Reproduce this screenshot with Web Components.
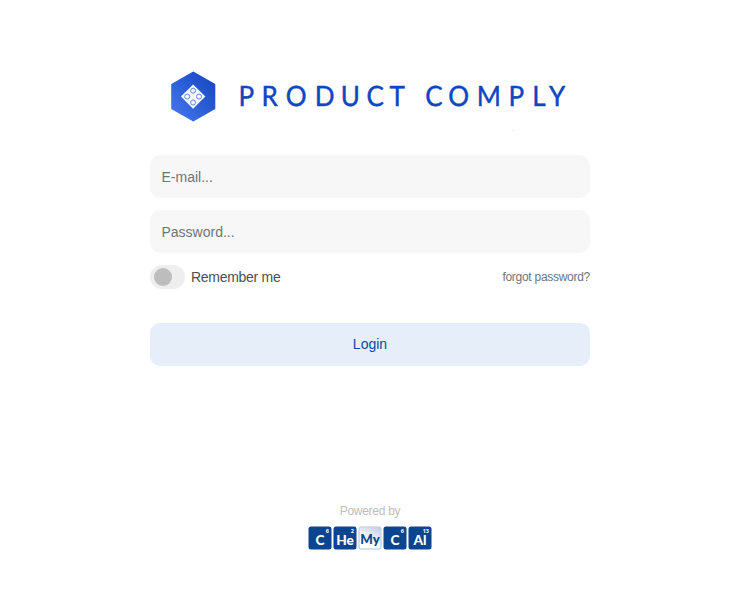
<!DOCTYPE html>
<html lang="en"><head><meta charset="utf-8"><title>Product Comply</title>
<style>
html,body{margin:0;background:#fff;font-family:"Liberation Sans",Arial,sans-serif;font-size:14px}
</style></head><body>
<login-page></login-page>
<script>
function define(name, html){
  const t=document.createElement('template'); t.innerHTML=html;
  customElements.define(name, class extends HTMLElement{
    constructor(){super();this.attachShadow({mode:'open'}).append(t.content.cloneNode(true));}
    connectedCallback(){
      const i=this.shadowRoot.querySelector('input');
      if(i){i.type=this.getAttribute('type')||'text';i.placeholder=this.getAttribute('placeholder')||'';}
    }
  });
}
define('brand-logo', `<style>:host{display:block;height:85px}svg{display:block}
text{font-family:Lato,"Open Sans",sans-serif;font-size:28px;fill:#0d47c1;stroke:#0d47c1;stroke-width:.45;text-rendering:geometricPrecision}</style>
<svg width="440" height="85" viewBox="150 60 440 85">
<defs><linearGradient id="g" x1="1" y1="0" x2="0" y2="1"><stop offset="0" stop-color="#1745c0"/><stop offset=".45" stop-color="#285bd5"/><stop offset="1" stop-color="#4a79ef"/></linearGradient></defs>
<path d="M193.3 72.6 L214.3 84.6 V108.4 L193.3 120.4 L172.2 108.4 V84.6Z" fill="url(#g)" stroke="url(#g)" stroke-width="2" stroke-linejoin="round"/>
<path d="M193.1 84.4 L205.3 96.6 L193.1 108.8 L180.9 96.6Z" fill="#f5f8ff"/>
<g fill="#f5f8ff" stroke="#6088e2" stroke-width="1"><circle cx="193.1" cy="90.7" r="2.5"/><circle cx="187.2" cy="96.6" r="2.5"/><circle cx="199" cy="96.6" r="2.5"/><circle cx="193.1" cy="102.5" r="2.5"/></g>
<g transform="translate(238.5 106.3) scale(.93 1)"><text x="0 24.8 50.7 81.9 110 137.5 162.4">PRODUCT</text></g>
<g transform="translate(425.2 106.3) scale(.93 1)"><text x="0 24.8 55.3 89.5 115.2 133.1">COMPLY</text></g>
<path d="M512 130.5h2.5" stroke="#ececec"/>
</svg>`);
define('text-field', `<style>:host{display:block;height:43px}
input{display:block;box-sizing:border-box;width:100%;height:43px;border:0;border-radius:10px;background:#f7f7f7;padding:0 12px 0 11.5px;font:inherit;color:#555;outline:0}
input::placeholder{color:#6c757d;opacity:1}</style><input>`);
define('toggle-switch', `<style>:host{display:flex;align-items:center;gap:6px;height:24px;color:#495057;letter-spacing:-.28px}
.track{width:35px;height:24px;border-radius:12px;background:#eee;display:flex;align-items:center;box-sizing:border-box;padding-left:4px}
.knob{width:18px;height:18px;border-radius:50%;background:#bdbdbd}</style><span class="track"><span class="knob"></span></span><span><slot></slot></span>`);
define('text-link', `<style>:host{display:block;font-size:12px;letter-spacing:-.28px;color:#6c757d}</style><slot></slot>`);
define('primary-button', `<style>:host{display:block}button{display:block;width:100%;height:43px;border:0;border-radius:10px;background:#e5eef9;color:#0d47a1;font:inherit;padding:0 0 2px}</style><button><slot></slot></button>`);
define('element-tile', `<style>:host{display:block;width:23px;height:23px;box-sizing:border-box;border-radius:2.5px;background:#0b458f;color:#fff;position:relative;font-family:Lato,sans-serif;font-weight:900;text-align:center}
:host([light]){background:linear-gradient(205deg,#c3cce2,#fff 65%);color:#0b458f;border:1px solid #a9c2de}
.s{display:block;font-size:13px;line-height:10px;padding-top:7.5px;transform:scaleX(1.05)}
:host([light]) .s{padding-top:6.5px;margin:0 -2px;font-size:12.6px}
.n{position:absolute;right:2px;top:2px;font-family:"Open Sans",sans-serif;font-weight:700;font-size:5.5px;line-height:5px}
.n ::slotted(span){display:block;line-height:5px}</style><span class="n"><slot name="n"></slot></span><span class="s"><slot></slot></span>`);
define('powered-by', `<style>:host{display:flex;flex-direction:column;align-items:center;gap:8px}
.t{font-size:12px;line-height:14px;letter-spacing:-.27px;color:#bdbdbd}.m{display:flex;gap:2px;padding-right:2px;transform:translate(.5px,.5px)}</style>
<div class="t">Powered by</div><div class="m">
<element-tile>C<span slot="n">6</span></element-tile><element-tile>He<span slot="n">2</span></element-tile><element-tile light>My</element-tile><element-tile>C<span slot="n">6</span></element-tile><element-tile>Al<span slot="n">13</span></element-tile></div>`);
define('login-page', `<style>:host{display:block;box-sizing:border-box;height:609px;padding:60px 144px 0 150px}
brand-logo{margin-bottom:10px}text-field{margin-bottom:12px}
.row{display:flex;justify-content:space-between;align-items:center;height:24px;margin-bottom:34px}
powered-by{margin-top:138px}</style>
<brand-logo></brand-logo><text-field placeholder="E-mail..."></text-field><text-field type="password" placeholder="Password..."></text-field>
<div class="row"><toggle-switch>Remember me</toggle-switch><text-link>forgot password?</text-link></div>
<primary-button>Login</primary-button><powered-by></powered-by>`);
</script></body></html>
